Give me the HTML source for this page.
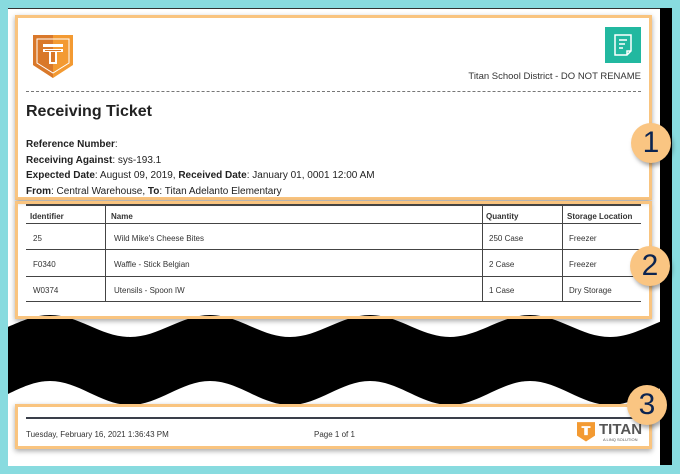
<!DOCTYPE html>
<html><head><style>
body{margin:0;width:680px;height:474px;background:#88dbdf;position:relative;overflow:hidden;font-family:"Liberation Sans",sans-serif;color:#333}
.page{position:absolute;left:8px;top:8px;width:652px;height:457px;background:#fff;border-top:1.5px solid #333}
.strip{position:absolute;left:660px;top:8px;width:12px;height:457px;background:#000}
.box{position:absolute;border:3px solid #f9c47f;box-shadow:0 2px 5px rgba(0,0,0,.35)}
.t{position:absolute;white-space:nowrap}
.circ{position:absolute;width:40px;height:40px;border-radius:50%;background:#fac582;color:#0c2450;font-size:30px;text-align:center;line-height:40px;box-shadow:2px 3px 4px rgba(0,0,0,.35)}
.row{position:absolute;left:26px;width:615px;border-top:1px solid #444;font-size:8px}
.vl{position:absolute;width:1px;background:#444;top:205px;height:96px}
</style></head><body>
<div class="page"></div>
<div class="strip"></div>
<svg style="position:absolute;left:8px;top:0" width="660" height="474" viewBox="8 0 660 474">
<path d="M-30,337 C-1,337 21,315 50,315 C79,315 101,337 130,337 C159,337 181,315 210,315 C239,315 261,337 290,337 C319,337 341,315 370,315 C399,315 421,337 450,337 C479,337 501,315 530,315 C559,315 581,337 610,337 C639,337 661,315 690,315 L690,381 C661,381 639,405 610,405 C581,405 559,381 530,381 C501,381 479,405 450,405 C421,405 399,381 370,381 C341,381 319,405 290,405 C261,405 239,381 210,381 C181,381 159,405 130,405 C101,405 79,381 50,381 C21,381 -1,405 -30,405 Z" fill="#000"/>
</svg>
<div class="box" style="left:15px;top:15px;width:631px;height:179px"></div>
<div class="box" style="left:15px;top:201px;width:631px;height:112px"></div>
<div class="box" style="left:15px;top:404px;width:631px;height:39px"></div>
<svg style="position:absolute;left:33px;top:35px" width="40" height="44" viewBox="0 0 40 44">
<path d="M0,0 H40 V30 L20,43 L0,30 Z" fill="#f39a32"/><path d="M0,0 H20 V43 L0,30 Z" fill="#d9782a"/>
<path d="M4,4 H36 V28 L20,38 L4,28 Z" fill="none" stroke="#fff" stroke-width="1"/>
<rect x="10" y="9" width="20" height="3" fill="#fff"/><rect x="10" y="14" width="20" height="3" fill="#fff"/>
<rect x="16" y="17" width="8" height="12" fill="#fff"/><rect x="18" y="17" width="4" height="10" fill="#d9782a"/>
<rect x="12" y="15" width="16" height="1" fill="#d9782a"/></svg>
<div style="position:absolute;left:605px;top:27px;width:36px;height:36px;background:#22b8a0"></div>
<svg style="position:absolute;left:605px;top:27px" width="36" height="36"><path d="M10,8 H26 V24 L22,28 H10 Z M22,28 V24 H26" fill="none" stroke="#fff" stroke-width="1.5"/><path d="M14,13 H22 M14,17 H20 M14,21 H18" stroke="#fff" stroke-width="1.5"/></svg>
<div class="t" style="right:39px;top:71px;font-size:9.5px">Titan School District - DO NOT RENAME</div>
<div style="position:absolute;left:26px;top:91px;width:615px;border-top:1px dashed #777"></div>
<div class="t" style="left:26px;top:103px;font-size:16px;font-weight:bold;color:#222">Receiving Ticket</div>
<div class="t" style="left:26px;top:137px;font-size:10px;line-height:15.5px;color:#222"><b>Reference Number</b>:<br><b>Receiving Against</b>: sys-193.1<br><b>Expected Date</b>: August 09, 2019, <b>Received Date</b>: January 01, 0001 12:00 AM<br><b>From</b>: Central Warehouse, <b>To</b>: Titan Adelanto Elementary</div>
<div class="row" style="top:204px;border-top:2px solid #444;height:18px;font-weight:bold"><span class="t" style="left:4px;top:6px">Identifier</span><span class="t" style="left:85px;top:6px">Name</span><span class="t" style="left:460px;top:6px">Quantity</span><span class="t" style="left:541px;top:6px">Storage Location</span></div>
<div class="row" style="top:223px;height:26px"><span class="t" style="left:7px;top:10px">25</span><span class="t" style="left:88px;top:10px">Wild Mike's Cheese Bites</span><span class="t" style="left:463px;top:10px">250 Case</span><span class="t" style="left:543px;top:10px">Freezer</span></div>
<div class="row" style="top:249px;height:26px"><span class="t" style="left:7px;top:10px">F0340</span><span class="t" style="left:88px;top:10px">Waffle - Stick Belgian</span><span class="t" style="left:463px;top:10px">2 Case</span><span class="t" style="left:543px;top:10px">Freezer</span></div>
<div class="row" style="top:276px;height:25px"><span class="t" style="left:7px;top:9px">W0374</span><span class="t" style="left:88px;top:9px">Utensils - Spoon IW</span><span class="t" style="left:463px;top:9px">1 Case</span><span class="t" style="left:543px;top:9px">Dry Storage</span></div>
<div class="row" style="top:301px;height:0"></div>
<div class="vl" style="left:105px"></div><div class="vl" style="left:482px"></div><div class="vl" style="left:562px"></div>
<div style="position:absolute;left:26px;top:417px;width:619px;height:2px;background:#3a3f4a"></div>
<div class="t" style="left:26px;top:430px;font-size:8px">Tuesday, February 16, 2021 1:36:43 PM</div>
<div class="t" style="left:314px;top:430px;font-size:8px">Page 1 of 1</div>
<svg style="position:absolute;left:577px;top:422px" width="18" height="20" viewBox="0 0 40 44"><path d="M0,0 H40 V30 L20,43 L0,30 Z" fill="#f39a32"/><rect x="10" y="9" width="20" height="4" fill="#fff"/><rect x="16" y="13" width="8" height="16" fill="#fff"/></svg>
<div class="t" style="left:599px;top:421px;font-size:15px;font-weight:bold;color:#555">TITAN</div>
<div class="t" style="left:603px;top:437px;font-size:4px;color:#555">A LINQ SOLUTION</div>
<div class="circ" style="left:631px;top:123px">1</div>
<div class="circ" style="left:630px;top:246px">2</div>
<div class="circ" style="left:627px;top:385px">3</div>
</body></html>
